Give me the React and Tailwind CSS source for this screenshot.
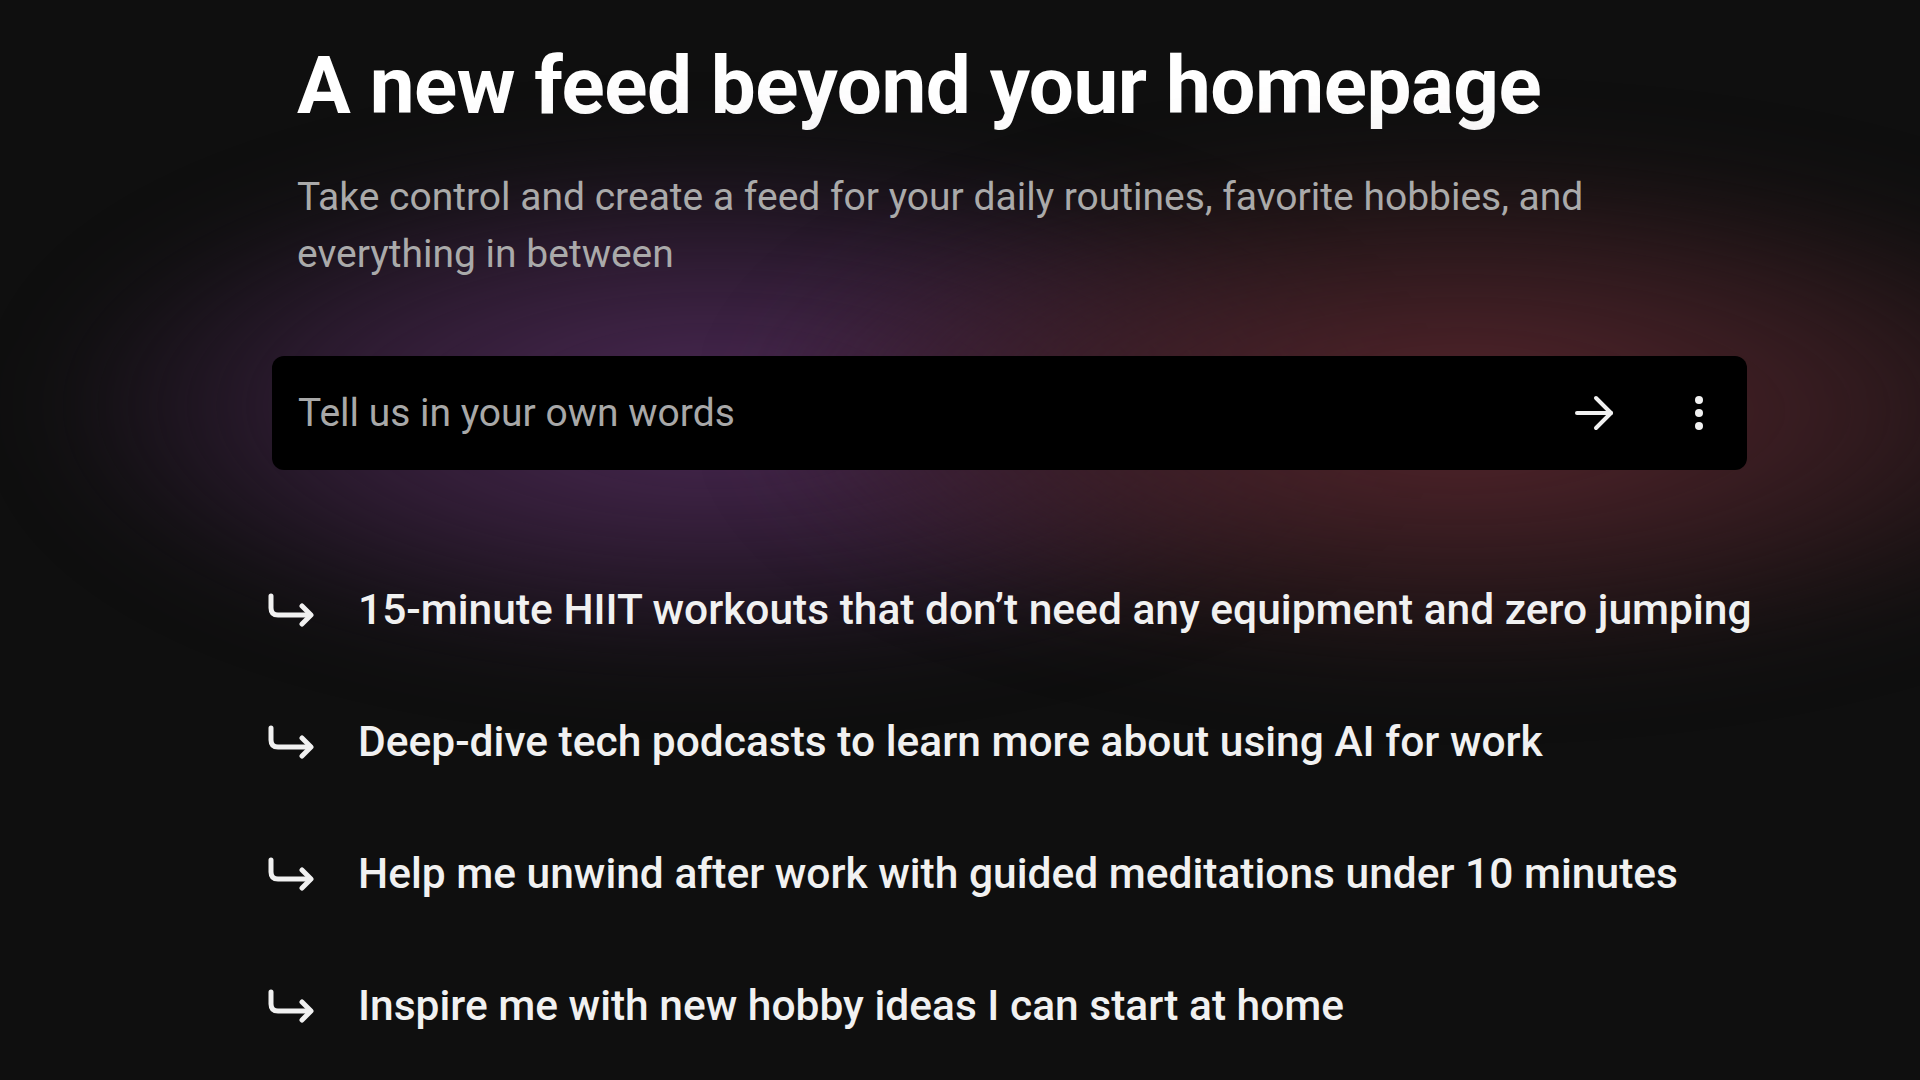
import React from "react";

const ideas = [
  "15-minute HIIT workouts that don’t need any equipment and zero jumping",
  "Deep-dive tech podcasts to learn more about using AI for work",
  "Help me unwind after work with guided meditations under 10 minutes",
  "Inspire me with new hobby ideas I can start at home",
];

function ReplyArrow() {
  return (
    <svg width="50" height="34" viewBox="0 0 50 34" fill="none" className="shrink-0">
      <path d="M4 3 V15 Q4 22 11 22 H43" stroke="#f1f1f1" strokeWidth="5" strokeLinecap="round" strokeLinejoin="round" />
      <path d="M35 13 L44 22 L35 31" stroke="#f1f1f1" strokeWidth="5" strokeLinecap="round" strokeLinejoin="round" />
    </svg>
  );
}

export default function App() {
  return (
    <div className="w-[1920px] h-[1080px] overflow-hidden bg-[#0f0f0f] text-white" style={{ fontFamily: "Roboto, 'Noto Sans', sans-serif" }}>
      <div className="ml-[272px] w-[1475px] flex flex-col">
        <h1 className="pl-[25px] pt-[36px] text-[80px] leading-[100px] font-bold tracking-[-0.5px] text-white">
          A new feed beyond your homepage
        </h1>
        <p className="relative z-10 pl-[25px] mt-[33px] max-w-[1360px] text-[39px] leading-[57px] text-[#aaaaaa]">
          Take control and create a feed for your daily routines, favorite hobbies, and everything in between
        </p>

        {/* search box with glow */}
        <div className="relative mt-[73px]">
          <div className="absolute left-[-240px] top-[-215px] w-[1360px] h-[530px] blur-[40px] bg-[radial-gradient(closest-side,rgba(78,42,88,0.95),rgba(62,34,68,0.7)_55%,transparent)]" />
          <div className="absolute left-[470px] top-[-210px] w-[1440px] h-[530px] blur-[40px] bg-[radial-gradient(closest-side,rgba(90,38,46,0.95),rgba(66,32,38,0.7)_55%,transparent)]" />
          <div className="relative h-[114px] rounded-[12px] bg-black flex items-center pl-[26px] pr-[44px]">
            <span className="flex-1 text-[39px] text-[#a8a8a8]">Tell us in your own words</span>
            <svg width="40" height="36" viewBox="0 0 40 36" fill="none" className="mr-[80px]">
              <path d="M2 18 H36" stroke="#f1f1f1" strokeWidth="4" strokeLinecap="round" />
              <path d="M21 3 L36 18 L21 33" stroke="#f1f1f1" strokeWidth="4" strokeLinecap="round" strokeLinejoin="round" />
            </svg>
            <div className="flex flex-col gap-[5px]">
              <span className="w-[8px] h-[8px] rounded-full bg-[#f1f1f1]" />
              <span className="w-[8px] h-[8px] rounded-full bg-[#f1f1f1]" />
              <span className="w-[8px] h-[8px] rounded-full bg-[#f1f1f1]" />
            </div>
          </div>
        </div>

        <ul className="relative mt-[115px] flex flex-col gap-[82px]">
          {ideas.map((t) => (
            <li key={t} className="flex items-center -ml-[5px]">
              <ReplyArrow />
              <span className="ml-[41px] whitespace-nowrap text-[42.5px] leading-[50px] font-medium text-[#f1f1f1]">{t}</span>
            </li>
          ))}
        </ul>
      </div>
    </div>
  );
}
